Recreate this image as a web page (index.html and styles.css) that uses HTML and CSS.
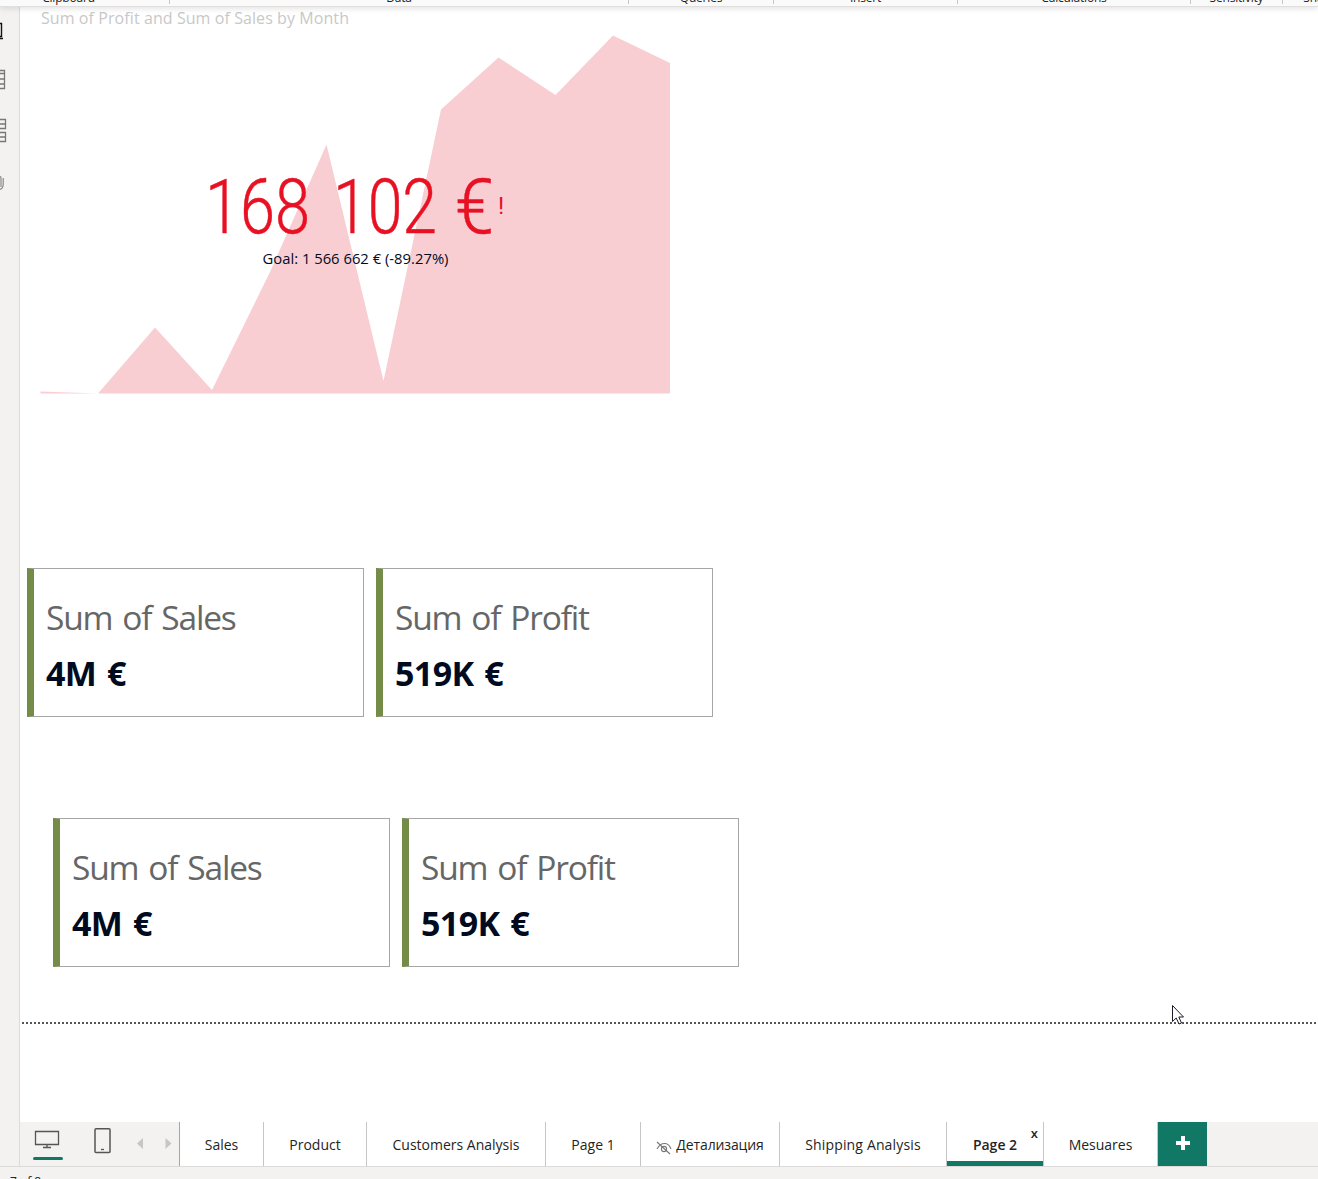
FILE: index.html
```html
<!DOCTYPE html>
<html lang="en">
<head>
<meta charset="utf-8">
<title>Page 2</title>
<link rel="stylesheet" href="styles.css">
</head>
<body>
<header class="ribbon">
  <div class="group g-clipboard"><span>Clipboard</span></div>
  <div class="group g-data"><span>Data</span></div>
  <div class="group g-queries"><span>Queries</span></div>
  <div class="group g-insert"><span>Insert</span></div>
  <div class="group g-calc"><span>Calculations</span></div>
  <div class="group g-sens"><span>Sensitivity</span></div>
  <div class="group g-share"><span>Share</span></div>
</header>
<div class="workspace">
  <nav class="rail">
    <svg width="19" height="200" viewBox="0 7 19 200" fill="none">
      <path d="M0 23.5H1.5V36.5H0M0 38.5H3" stroke="#111" stroke-width="1.4"/>
      <path d="M0 70.5H4.5V88.5H0M0 73.5H4M0 79H4M0 84H4" stroke="#777" stroke-width="1.3"/>
      <path d="M0 119.5H5.5V128.5H0M0 124H5M0 132.500H5.500V141.500H0M0 137H5" stroke="#777" stroke-width="1.3"/>
      <path d="M0 177Q1 175.500 1 180V187M3.200 178V184Q3.200 188.500 0 189.500" stroke="#888" stroke-width="1.2"/>
    </svg>
  </nav>
  <main class="canvas">
    <section class="kpi">
      <h2 class="kpi-title">Sum of Profit and Sum of Sales by Month</h2>
      <svg class="kpi-chart" width="640" height="370" viewBox="35 30 640 370">
        <path d="M40.500 391.500L98 393.500L155 327.500L212 390L270 272L326.500 144.500L383.500 381L441 109.500L498.500 57.500L555.500 95L613 35.500L670 63V393.500H40.500Z" fill="#f9ced2"/>
        <g class="kpi-value">
          <text x="205" y="233" textLength="105" lengthAdjust="spacingAndGlyphs">168</text>
          <text x="333" y="233" textLength="104" lengthAdjust="spacingAndGlyphs">102</text>
          <text x="455" y="233" textLength="39" lengthAdjust="spacingAndGlyphs">€</text>
        </g>
        <text class="kpi-mark" x="498" y="213.500">!</text>
        <text class="kpi-goal" x="262.500" y="263.500" textLength="186" lengthAdjust="spacingAndGlyphs">Goal: 1 566 662 € (-89.27%)</text>
      </svg>
    </section>
    <section class="cards">
      <article class="card"><div class="label">Sum of Sales</div><div class="value">4M €</div></article>
      <article class="card"><div class="label">Sum of Profit</div><div class="value">519K €</div></article>
    </section>
    <section class="cards second">
      <article class="card"><div class="label">Sum of Sales</div><div class="value">4M €</div></article>
      <article class="card"><div class="label">Sum of Profit</div><div class="value">519K €</div></article>
    </section>
    <svg class="page-edge" width="1298" height="22" viewBox="20 1003 1298 22">
      <path d="M22 1023H1316" stroke="#555" stroke-width="2" stroke-dasharray="2 2"/>
      <path d="M1172.500 1005.500V1021.500L1176.200 1018L1179 1024L1181.500 1023L1178.800 1017H1183.500Z" fill="#fff" stroke="#1a1a2a"/>
    </svg>
    <footer class="tabs">
      <div class="tools">
        <svg width="159" height="44" viewBox="20 1122 159 44" fill="none">
          <path d="M35.500 1131.500H58.500V1144.500H35.500ZM47 1145V1148M43 1147.500H51" stroke="#555" stroke-width="1.300"/>
          <rect x="33" y="1157" width="30" height="3" rx="1.500" fill="#117865"/>
          <rect x="95" y="1128.700" width="15" height="23.800" rx="1" stroke="#555" stroke-width="1.500"/>
          <path d="M101 1149.500H104" stroke="#555" stroke-width="1.300"/>
          <path d="M143 1138V1149L137 1143.500ZM165.500 1138V1149L171.500 1143.500Z" fill="#c8c6c4"/>
        </svg>
      </div>
      <div class="tab t1"><span>Sales</span></div>
      <div class="tab t2"><span>Product</span></div>
      <div class="tab t3"><span>Customers Analysis</span></div>
      <div class="tab t4"><span>Page 1</span></div>
      <div class="tab t5">
        <svg width="16" height="14" viewBox="0 0 16 14" fill="none" stroke="#777" stroke-width="1.100"><path d="M1 8Q4 2.500 8.500 2.500Q13 2.500 15 8M1 1L14 13"/><circle cx="8" cy="8" r="2.600"/></svg>
        <span>Детализация</span>
      </div>
      <div class="tab t6"><span>Shipping Analysis</span></div>
      <div class="tab t7 active"><span>Page 2</span><b class="close">x</b></div>
      <div class="tab t8"><span>Mesuares</span></div>
      <div class="add"><svg width="14" height="14" viewBox="0 0 14 14"><path d="M7 0V14M0 7H14" stroke="#fff" stroke-width="4"/></svg></div>
    </footer>
  </main>
</div>
<div class="status"><span>7 of 8</span></div>
</body>
</html>
```
FILE: styles.css
```css
* { box-sizing: border-box; }
body {
  margin: 0;
  width: 1318px;
  height: 1179px;
  overflow: hidden;
  display: flex;
  flex-direction: column;
  background: #fff;
  color: #252423;
  font-family: "Open Sans", "Noto Sans", sans-serif;
}
svg { display: block; flex: none; }
.ribbon {
  flex: none;
  height: 7px;
  display: flex;
  background: #fafafa;
  border-bottom: 1px solid #e1dfdd;
  box-shadow: 0 1px 6px rgba(0, 0, 0, .14);
  position: relative;
  z-index: 1;
}
.group {
  flex: none;
  height: 4px;
  border-right: 1px solid #c8c6c4;
  display: flex;
  align-items: flex-end;
  justify-content: center;
  font-size: 12px;
  line-height: 12px;
  letter-spacing: -.2px;
  white-space: nowrap;
}
.group span { margin-bottom: 0; }
.g-clipboard { width: 170px; padding-right: 32px; }
.g-data { width: 459px; }
.g-queries { width: 145px; }
.g-insert { width: 184px; }
.g-calc { width: 233px; }
.g-sens { width: 92px; }
.g-share { width: 72px; border: 0; }

.workspace { flex: none; height: 1159px; display: flex; }
.rail { width: 20px; background: #f3f2f1; border-right: 1px solid #dddbd9; overflow: hidden; }
.canvas { width: 1298px; display: flex; flex-direction: column; }

.kpi { height: 561px; padding-left: 15px; flex: none; }
.kpi-title {
  margin: 0;
  height: 23px;
  padding-left: 6px;
  font-size: 16px;
  font-weight: 400;
  line-height: 23px;
  letter-spacing: .08px;
  color: #c8c8c8;
  white-space: nowrap;
}
.kpi-value { font: 300 76px Roboto, sans-serif; fill: #e81123; stroke: #e81123; stroke-width: .5px; }
.kpi-mark { font: 24px Roboto, sans-serif; fill: #e81123; }
.kpi-goal { font-size: 14px; fill: #010b1f; }

.cards { display: flex; gap: 12px; height: 149px; padding-left: 7px; flex: none; }
.cards.second { margin-top: 101px; padding-left: 33px; }
.card {
  width: 337px;
  padding: 23px 0 0 12px;
  border: 1px solid #a6a6a6;
  border-left: 7px solid #758c48;
  white-space: nowrap;
}
.label { font-size: 33.5px; line-height: 50px; letter-spacing: -1.2px; word-spacing: 2.5px; color: #666; }
.value { margin-top: 8px; font-size: 34px; line-height: 46px; font-weight: 700; letter-spacing: -.6px; word-spacing: 2.5px; color: #010b1f; }

.page-edge { margin-top: 36px; }

.tabs { margin-top: auto; height: 44px; display: flex; background: #f3f2f1; flex: none; }
.tools { width: 160px; border-right: 1px solid #a5a5a5; }
.tab {
  flex: none;
  display: flex;
  align-items: center;
  justify-content: center;
  padding-top: 1px;
  background: #fff;
  border-right: 1px solid #c8c6c4;
  font-size: 14px;
  letter-spacing: 0;
  white-space: nowrap;
}
.t1 { width: 84px; }
.t2 { width: 103px; }
.t3 { width: 179px; }
.t4 { width: 95px; }
.t5 { width: 139px; gap: 4px; letter-spacing: -.12px; }
.t5 svg { margin-top: 7px; }
.t6 { width: 167px; letter-spacing: .15px; }
.t7 { width: 97px; letter-spacing: 0; }
.t8 { width: 114px; letter-spacing: 0; }
.active { position: relative; font-weight: 600; box-shadow: inset 0 -5px #117865; }
.close { position: absolute; right: 5px; top: 3px; font-size: 13px; line-height: 16px; font-weight: 600; }
.add { width: 49px; background: #117865; display: flex; align-items: center; justify-content: center; padding-bottom: 3px; }

.status {
  flex: none;
  height: 13px;
  padding: 7px 0 0 10px;
  background: #f3f2f1;
  border-top: 1px solid #dddbd9;
  font-size: 12px;
  line-height: 16px;
  overflow: hidden;
}
```
